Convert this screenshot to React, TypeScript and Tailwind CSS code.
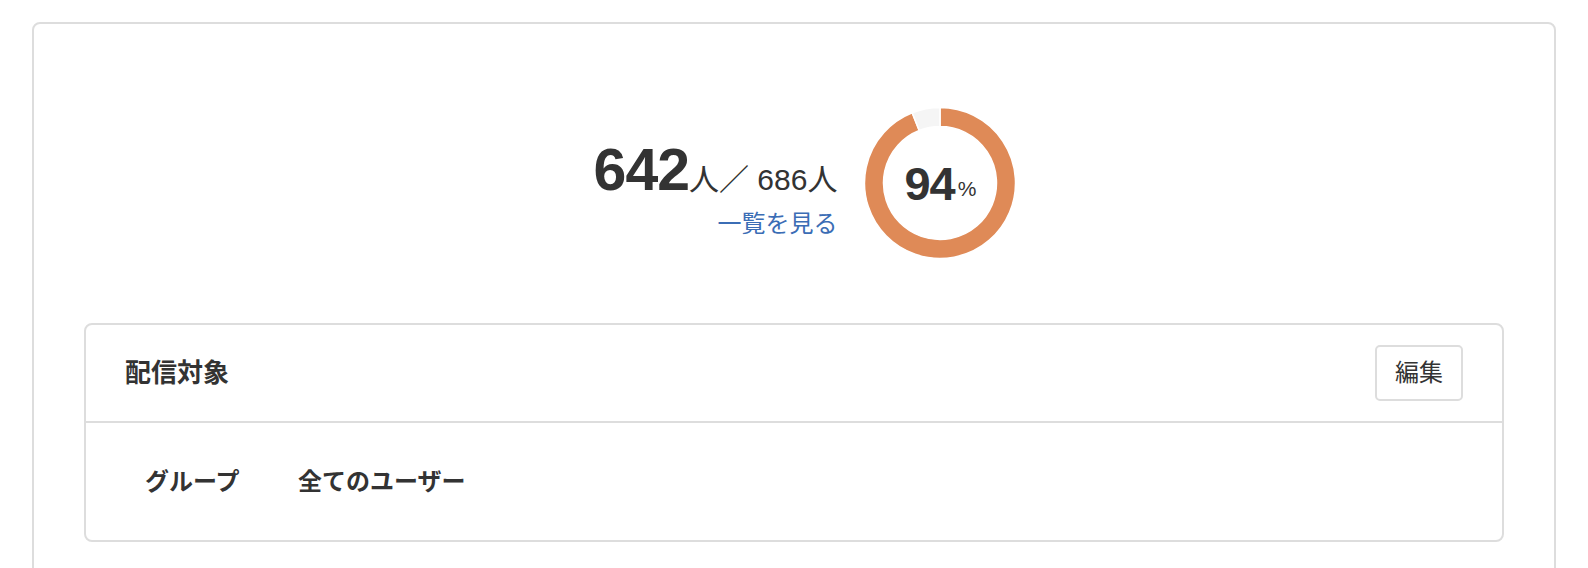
import React from "react";

const font = { fontFamily: '"Liberation Sans", "Noto Sans CJK JP", sans-serif' };

function pt(cx: number, cy: number, r: number, deg: number) {
  const a = (deg * Math.PI) / 180;
  return [cx + r * Math.sin(a), cy - r * Math.cos(a)];
}

function sector(cx: number, cy: number, R: number, r: number, a0: number, a1: number) {
  const large = a1 - a0 > 180 ? 1 : 0;
  const [x0, y0] = pt(cx, cy, R, a0);
  const [x1, y1] = pt(cx, cy, R, a1);
  const [x2, y2] = pt(cx, cy, r, a1);
  const [x3, y3] = pt(cx, cy, r, a0);
  return `M${x0} ${y0} A${R} ${R} 0 ${large} 1 ${x1} ${y1} L${x2} ${y2} A${r} ${r} 0 ${large} 0 ${x3} ${y3} Z`;
}

function Donut({ pct }: { pct: number }) {
  const split = (pct / 100) * 360;
  return (
    <div className="relative w-[152px] h-[152px]">
      <svg width="152" height="152" viewBox="0 0 152 152">
        <path d={sector(76, 76, 75.5, 56.5, 0, split)} fill="#df8a57" stroke="#fff" strokeWidth="1.5" />
        <path d={sector(76, 76, 75.5, 56.5, split, 360)} fill="#f5f5f5" stroke="#fff" strokeWidth="1.5" />
      </svg>
      <div className="absolute inset-0 flex items-center justify-center text-[#333]">
        <span className="text-[47px] font-bold leading-none tracking-[-1px]">{pct}</span>
        <span className="text-[21px] leading-none mt-[10px] ml-[3px]">%</span>
      </div>
    </div>
  );
}

export default function App() {
  return (
    <div className="w-[1588px] h-[568px] overflow-hidden bg-white px-8 pt-[22px]" style={font}>
      <div className="border-2 border-[#ddd] rounded-lg h-[600px] px-[50px]">
        <div className="flex items-center justify-center pt-[83px] pl-[22px]">
          <div className="flex flex-col items-end text-[#333] mt-[10px]">
            <div className="flex items-baseline">
              <span className="text-[59px] font-bold leading-none tracking-[-1px]">642</span>
              <span className="text-[30px] leading-none">人／ 686人</span>
            </div>
            <a className="text-[24px] text-[#3b6db5] mt-[12px] leading-none">一覧を見る</a>
          </div>
          <div className="ml-[27px]">
            <Donut pct={94} />
          </div>
        </div>
        <div className="mt-[64px] border-2 border-[#ddd] rounded-lg">
          <div className="flex items-center justify-between h-[98px] pl-[39px] pr-[39px] border-b-2 border-[#ddd]">
            <div className="text-[26px] font-bold text-[#333]">配信対象</div>
            <button className="w-[88px] h-[56px] border-2 border-[#ddd] rounded-[5px] text-[24px] text-[#333] bg-white">
              編集
            </button>
          </div>
          <div className="flex items-center h-[117px] pl-[59px] text-[24px] font-bold text-[#333]">
            <div className="w-[153px]">グループ</div>
            <div>全てのユーザー</div>
          </div>
        </div>
      </div>
    </div>
  );
}
